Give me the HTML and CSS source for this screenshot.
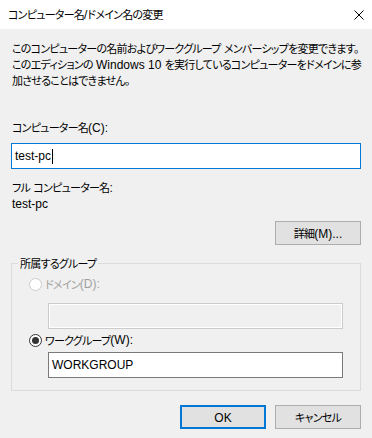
FILE: index.html
```html
<!DOCTYPE html>
<html lang="ja">
<head>
  <meta charset="UTF-8" />
  <meta name="viewport" content="width=device-width, initial-scale=1.0"/>
  <title>コンピューター名/ドメイン名の変更</title>
  <link rel="stylesheet" href="styles.css">
</head>
<body>
  <div class="dialog">
    <!-- Title bar -->
    <div class="titlebar">
      <span class="title">コンピューター名<span class="en">/</span>ドメイン名の変更</span>
      <svg class="close" width="10" height="10" viewBox="0 0 10 10">
        <path d="M0.5 0.5 L9.5 9.5 M9.5 0.5 L0.5 9.5" stroke="#000" stroke-width="1" fill="none"/>
      </svg>
    </div>

    <div class="content">
      <p class="desc">
        このコンピューターの名前およびワークグループ<span class="en"> </span>メンバーシップを変更できます。<br>
        このエディションの<span class="en"> Windows 10 </span>を実行しているコンピューターをドメインに参<br>
        加させることはできません。
      </p>

      <div class="field-label">コンピューター名<span class="en">(C):</span></div>
      <div class="textbox focused"><span class="en">test-pc</span><span class="caret"></span></div>

      <div class="info-label">フル<span class="en"> </span>コンピューター名<span class="en">:</span></div>
      <div class="info-value"><span class="en">test-pc</span></div>

      <div class="button-row">
        <button class="btn">詳細<span class="en">(M)...</span></button>
      </div>

      <!-- Member of -->
      <fieldset class="group">
        <legend>所属するグループ</legend>
        <div class="radio disabled"><span class="radio-mark"></span>ドメイン<span class="en">(D):</span></div>
        <div class="textbox disabled"></div>
        <div class="radio"><span class="radio-mark checked"></span>ワークグループ<span class="en">(W):</span></div>
        <div class="textbox"><span class="en">WORKGROUP</span></div>
      </fieldset>

      <div class="button-row footer">
        <button class="btn default"><span class="en">OK</span></button>
        <button class="btn">キャンセル</button>
      </div>
    </div>
  </div>
</body>
</html>
```

FILE: styles.css
```css
body {
  margin: 0;
  background-color: #f0f0f0;
  color: #000;
  font-family: "Noto Sans CJK JP", sans-serif;
  font-size: 11px;
  line-height: 16px;
  letter-spacing: -0.75px;
  font-feature-settings: "palt" 1;
  white-space: nowrap;
}

/* latin runs: Segoe UI stand-in */
.en {
  font-family: "Liberation Sans", sans-serif;
  font-size: 12px;
  line-height: 12px;
  letter-spacing: 0;
  white-space: pre;
}

.dialog {
  inline-size: 372px;
  block-size: 438px;
  overflow: hidden;
}

.titlebar {
  display: flex;
  align-items: center;
  justify-content: space-between;
  block-size: 29px;
  background: #fff;
  padding: 0 8px 1px 8px;
  box-sizing: border-box;
}

.close {
  margin-block-start: 1px;
}

.content {
  padding: 0 11px;
}

.desc {
  margin: 11px 0 0 1px;
}

.field-label {
  margin: 31px 0 0 1px;
}

.textbox {
  box-sizing: border-box;
  block-size: 26px;
  background: #fff;
  border: 1px solid #7a7a7a;
  padding: 0 3px;
  display: flex;
  align-items: center;
}

.textbox.focused {
  margin-block-start: 8px;
  border-color: #0078d7;
}

.caret {
  display: inline-block;
  inline-size: 1px;
  block-size: 15px;
  background: #000;
  margin-inline-start: 1px;
}

.textbox.disabled {
  background: #f0f0f0;
  border-color: #cccccc;
  box-shadow: inset 0 0 0 1px #fff;
}

.info-label {
  margin: 10px 0 0 1px;
}

.info-value {
  margin-inline-start: 1px;
}

.button-row {
  display: flex;
  justify-content: flex-end;
  gap: 9px;
  margin-block-start: 10px;
}

.btn {
  box-sizing: border-box;
  inline-size: 86px;
  block-size: 24px;
  background: #e1e1e1;
  border: 1px solid #adadad;
  font: inherit;
  letter-spacing: inherit;
  color: #000;
  padding: 0;
}

.btn.default {
  border: 2px solid #0078d7;
}

.group {
  margin: 10px 0 0 0;
  padding: 0 17px 12px 17px;
  border: 1px solid #dcdcdc;
}

.group legend {
  margin-inline-start: -11px;
  padding: 0 2px;
}

.radio {
  display: flex;
  align-items: center;
  block-size: 16px;
  margin-block-start: 5px;
}

.radio + .textbox {
  margin: 11px 0 0 19px;
}

.textbox + .radio {
  margin-block-start: 3px;
}

.textbox:not(.disabled):last-child {
  margin: 4px 0 0 19px;
}

.radio-mark {
  box-sizing: border-box;
  inline-size: 13px;
  block-size: 13px;
  border: 1px solid #333;
  border-radius: 50%;
  background: #fff;
  margin-inline-end: 3px;
  display: flex;
  align-items: center;
  justify-content: center;
}

.radio-mark.checked::after {
  content: "";
  inline-size: 7px;
  block-size: 7px;
  border-radius: 50%;
  background: #333;
}

.radio.disabled {
  color: #a0a0a0;
}

.radio.disabled .radio-mark {
  border-color: #cccccc;
}

.footer {
  margin-block-start: 14px;
}
```
